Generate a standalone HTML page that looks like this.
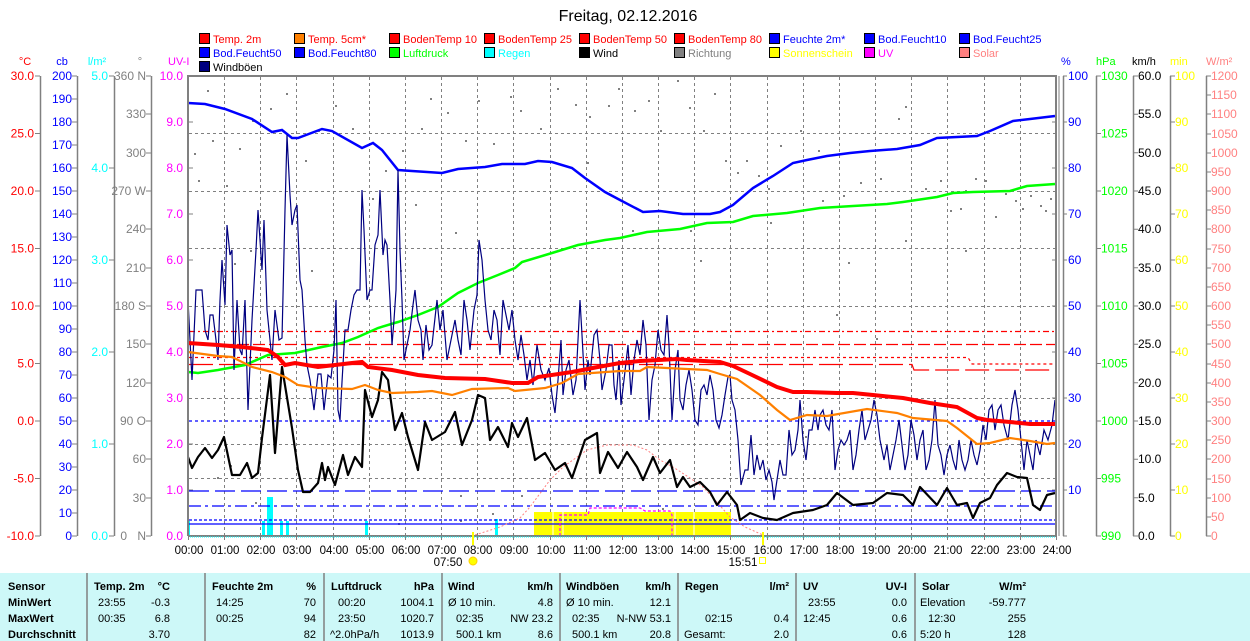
<!DOCTYPE html>
<html><head><meta charset="utf-8"><style>
html,body{margin:0;padding:0;background:#fff;width:1250px;height:641px;overflow:hidden}
svg{display:block;font-family:"Liberation Sans",Arial,sans-serif}
</style></head><body>
<svg width="1250" height="641" viewBox="0 0 1250 641" xmlns="http://www.w3.org/2000/svg">
<text x="628" y="21" font-size="16" text-anchor="middle" fill="#000">Freitag, 02.12.2016</text>
<g font-size="12" stroke="#000" stroke-width="1">
<rect x="199.5" y="33.5" width="10" height="10" fill="#f00"/><rect x="294.5" y="33.5" width="10" height="10" fill="#ff8000"/><rect x="389.5" y="33.5" width="10" height="10" fill="#f00"/><rect x="484.5" y="33.5" width="10" height="10" fill="#f00"/><rect x="579.5" y="33.5" width="10" height="10" fill="#f00"/><rect x="674.5" y="33.5" width="10" height="10" fill="#f00"/><rect x="769.5" y="33.5" width="10" height="10" fill="#00f"/><rect x="864.5" y="33.5" width="10" height="10" fill="#00f"/><rect x="959.5" y="33.5" width="10" height="10" fill="#00f"/>
<rect x="199.5" y="47.5" width="10" height="10" fill="#00f"/><rect x="294.5" y="47.5" width="10" height="10" fill="#00f"/><rect x="389.5" y="47.5" width="10" height="10" fill="#0f0"/><rect x="484.5" y="47.5" width="10" height="10" fill="#0ff"/><rect x="579.5" y="47.5" width="10" height="10" fill="#000"/><rect x="674.5" y="47.5" width="10" height="10" fill="#808080"/><rect x="769.5" y="47.5" width="10" height="10" fill="#ff0"/><rect x="864.5" y="47.5" width="10" height="10" fill="#f0f"/><rect x="959.5" y="47.5" width="10" height="10" fill="#ff8080"/>
<rect x="199.5" y="61.5" width="10" height="10" fill="#000080"/>
</g>
<g font-size="11">
<text x="213" y="43" fill="#f00">Temp. 2m</text><text x="308" y="43" fill="#f00">Temp. 5cm*</text><text x="403" y="43" fill="#f00">BodenTemp 10</text><text x="498" y="43" fill="#f00">BodenTemp 25</text><text x="593" y="43" fill="#f00">BodenTemp 50</text><text x="688" y="43" fill="#f00">BodenTemp 80</text><text x="783" y="43" fill="#00f">Feuchte 2m*</text><text x="878" y="43" fill="#00f">Bod.Feucht10</text><text x="973" y="43" fill="#00f">Bod.Feucht25</text>
<text x="213" y="57" fill="#00f">Bod.Feucht50</text><text x="308" y="57" fill="#00f">Bod.Feucht80</text><text x="403" y="57" fill="#0f0">Luftdruck</text><text x="498" y="57" fill="#0ff">Regen</text><text x="593" y="57" fill="#000">Wind</text><text x="688" y="57" fill="#808080">Richtung</text><text x="783" y="57" fill="#ff0">Sonnenschein</text><text x="878" y="57" fill="#f0f">UV</text><text x="973" y="57" fill="#ff8080">Solar</text>
<text x="213" y="71" fill="#000">Windböen</text>
</g>
<g font-size="11">
<text x="25" y="65" fill="#f00" text-anchor="middle">°C</text><text x="62" y="65" fill="#00f" text-anchor="middle">cb</text><text x="97" y="65" fill="#0ff" text-anchor="middle">l/m²</text><text x="140" y="65" fill="#808080" text-anchor="middle">°</text><text x="168" y="65" fill="#f0f">UV-I</text>
<text x="1061" y="65" fill="#00f">%</text><text x="1096" y="65" fill="#0f0">hPa</text><text x="1132" y="65" fill="#000">km/h</text><text x="1170" y="65" fill="#ff0">min</text><text x="1206" y="65" fill="#ff8080">W/m²</text>
</g>
<g stroke="#808080" stroke-width="1.5" fill="none">
<path d="M40.5 76V536M77.5 76V536M114.5 76V536M151.5 76V536"/>
<path d="M1063.5 76V536M1096.5 76V536M1133.5 76V536M1170.5 76V536M1206.5 76V536"/>
</g>
<g stroke="#808080" stroke-width="1">
<path d="M35 76h5M35 133.5h5M35 191h5M35 248.5h5M35 306h5M35 363.5h5M35 421h5M35 478.5h5M35 536h5"/>
<path d="M72 76h5M72 99h5M72 122h5M72 145h5M72 168h5M72 191h5M72 214h5M72 237h5M72 260h5M72 283h5M72 306h5M72 329h5M72 352h5M72 375h5M72 398h5M72 421h5M72 444h5M72 467h5M72 490h5M72 513h5M72 536h5"/>
<path d="M109 76h5M109 168h5M109 260h5M109 352h5M109 444h5M109 536h5"/>
<path d="M146 76h5M146 114h5M146 153h5M146 191h5M146 229h5M146 268h5M146 306h5M146 344h5M146 383h5M146 421h5M146 459h5M146 498h5M146 536h5"/>
<path d="M1063 76h4M1063 122h4M1063 168h4M1063 214h4M1063 260h4M1063 306h4M1063 352h4M1063 398h4M1063 444h4M1063 490h4M1063 536h4"/>
<path d="M1096 76h5M1096 133.5h5M1096 191h5M1096 248.5h5M1096 306h5M1096 363.5h5M1096 421h5M1096 478.5h5M1096 536h5"/>
<path d="M1133 76h5M1133 114.3h5M1133 152.7h5M1133 191h5M1133 229.3h5M1133 267.7h5M1133 306h5M1133 344.3h5M1133 382.7h5M1133 421h5M1133 459.3h5M1133 497.7h5M1133 536h5"/>
<path d="M1170 76h5M1170 122h5M1170 168h5M1170 214h5M1170 260h5M1170 306h5M1170 352h5M1170 398h5M1170 444h5M1170 490h5M1170 536h5"/>
<path d="M1206 76h5M1206 95h5M1206 114h5M1206 134h5M1206 153h5M1206 172h5M1206 191h5M1206 210h5M1206 229h5M1206 249h5M1206 268h5M1206 287h5M1206 306h5M1206 325h5M1206 344h5M1206 364h5M1206 383h5M1206 402h5M1206 421h5M1206 440h5M1206 459h5M1206 479h5M1206 498h5M1206 517h5M1206 536h5"/>
</g>
<g font-size="12" text-anchor="end" fill="#f00">
<text x="34" y="80">30.0</text><text x="34" y="137.5">25.0</text><text x="34" y="195">20.0</text><text x="34" y="252.5">15.0</text><text x="34" y="310">10.0</text><text x="34" y="367.5">5.0</text><text x="34" y="425">0.0</text><text x="34" y="482.5">-5.0</text><text x="34" y="540">-10.0</text>
</g>
<g font-size="12" text-anchor="end" fill="#00f">
<text x="72" y="80">200</text><text x="72" y="103">190</text><text x="72" y="126">180</text><text x="72" y="149">170</text><text x="72" y="172">160</text><text x="72" y="195">150</text><text x="72" y="218">140</text><text x="72" y="241">130</text><text x="72" y="264">120</text><text x="72" y="287">110</text><text x="72" y="310">100</text><text x="72" y="333">90</text><text x="72" y="356">80</text><text x="72" y="379">70</text><text x="72" y="402">60</text><text x="72" y="425">50</text><text x="72" y="448">40</text><text x="72" y="471">30</text><text x="72" y="494">20</text><text x="72" y="517">10</text><text x="72" y="540">0</text>
</g>
<g font-size="12" text-anchor="end" fill="#0ff">
<text x="108" y="80">5.0</text><text x="108" y="172">4.0</text><text x="108" y="264">3.0</text><text x="108" y="356">2.0</text><text x="108" y="448">1.0</text><text x="108" y="540">0.0</text>
</g>
<g font-size="12" text-anchor="end" fill="#808080">
<text x="146" y="80">360 N</text><text x="146" y="118">330</text><text x="146" y="157">300</text><text x="146" y="195">270 W</text><text x="146" y="233">240</text><text x="146" y="272">210</text><text x="146" y="310">180 S</text><text x="146" y="348">150</text><text x="146" y="387">120</text><text x="146" y="425">90  O</text><text x="146" y="463">60</text><text x="146" y="502">30</text><text x="146" y="540">N</text><text x="127" y="540">0</text>
</g>
<g font-size="12" text-anchor="end" fill="#f0f">
<text x="183" y="80">10.0</text><text x="183" y="126">9.0</text><text x="183" y="172">8.0</text><text x="183" y="218">7.0</text><text x="183" y="264">6.0</text><text x="183" y="310">5.0</text><text x="183" y="356">4.0</text><text x="183" y="402">3.0</text><text x="183" y="448">2.0</text><text x="183" y="494">1.0</text><text x="183" y="540">0.0</text>
</g>
<g font-size="12" fill="#00f">
<text x="1068" y="80">100</text><text x="1068" y="126">90</text><text x="1068" y="172">80</text><text x="1068" y="218">70</text><text x="1068" y="264">60</text><text x="1068" y="310">50</text><text x="1068" y="356">40</text><text x="1068" y="402">30</text><text x="1068" y="448">20</text><text x="1068" y="494">10</text>
</g>
<g font-size="12" fill="#0f0">
<text x="1101" y="80">1030</text><text x="1101" y="137.5">1025</text><text x="1101" y="195">1020</text><text x="1101" y="252.5">1015</text><text x="1101" y="310">1010</text><text x="1101" y="367.5">1005</text><text x="1101" y="425">1000</text><text x="1101" y="482.5">995</text><text x="1101" y="540">990</text>
</g>
<g font-size="12" fill="#000">
<text x="1138" y="80">60.0</text><text x="1138" y="118">55.0</text><text x="1138" y="157">50.0</text><text x="1138" y="195">45.0</text><text x="1138" y="233">40.0</text><text x="1138" y="272">35.0</text><text x="1138" y="310">30.0</text><text x="1138" y="348">25.0</text><text x="1138" y="387">20.0</text><text x="1138" y="425">15.0</text><text x="1138" y="463">10.0</text><text x="1138" y="502">5.0</text><text x="1138" y="540">0.0</text>
</g>
<g font-size="12" fill="#ff0">
<text x="1175" y="80">100</text><text x="1175" y="126">90</text><text x="1175" y="172">80</text><text x="1175" y="218">70</text><text x="1175" y="264">60</text><text x="1175" y="310">50</text><text x="1175" y="356">40</text><text x="1175" y="402">30</text><text x="1175" y="448">20</text><text x="1175" y="494">10</text><text x="1175" y="540">0</text>
</g>
<g font-size="12" fill="#ff8080">
<text x="1211" y="80">1200</text><text x="1211" y="99">1150</text><text x="1211" y="118">1100</text><text x="1211" y="138">1050</text><text x="1211" y="157">1000</text><text x="1211" y="176">950</text><text x="1211" y="195">900</text><text x="1211" y="214">850</text><text x="1211" y="233">800</text><text x="1211" y="253">750</text><text x="1211" y="272">700</text><text x="1211" y="291">650</text><text x="1211" y="310">600</text><text x="1211" y="329">550</text><text x="1211" y="348">500</text><text x="1211" y="368">450</text><text x="1211" y="387">400</text><text x="1211" y="406">350</text><text x="1211" y="425">300</text><text x="1211" y="444">250</text><text x="1211" y="463">200</text><text x="1211" y="483">150</text><text x="1211" y="502">100</text><text x="1211" y="521">50</text><text x="1211" y="540">0</text>
</g>
<g stroke="#808080" stroke-width="1" stroke-dasharray="3,3" fill="none">
<path d="M224.5 77V535M260.5 77V535M296.5 77V535M333.5 77V535M369.5 77V535M405.5 77V535M441.5 77V535M477.5 77V535M513.5 77V535M550.5 77V535M586.5 77V535M622.5 77V535M658.5 77V535M694.5 77V535M730.5 77V535M767.5 77V535M803.5 77V535M839.5 77V535M875.5 77V535M911.5 77V535M947.5 77V535M984.5 77V535M1020.5 77V535"/>
<path d="M189 133.5H1056M189 191.5H1056M189 248.5H1056M189 306.5H1056M189 398.5H1056M189 444.5H1056M189 478.5H1056"/>
</g>
<g stroke="#808080" stroke-width="1"><path d="M189 122h4M189 168h4M189 214h4M189 260h4M189 352h4M189 444h4M189 490h4M1052 122h4M1052 168h4M1052 214h4M1052 260h4M1052 306h4M1052 352h4M1052 398h4M1052 444h4M1052 490h4"/></g>
<g fill="#808080">
<rect x="207" y="90" width="2" height="2"/><rect x="252" y="120" width="2" height="2"/><rect x="270" y="108" width="2" height="2"/><rect x="286" y="93" width="2" height="2"/><rect x="194" y="153" width="2" height="2"/><rect x="198" y="180" width="2" height="2"/><rect x="212" y="140" width="2" height="2"/><rect x="239" y="148" width="2" height="2"/><rect x="226" y="185" width="2" height="2"/><rect x="305" y="160" width="2" height="2"/><rect x="318" y="130" width="2" height="2"/><rect x="335" y="105" width="2" height="2"/><rect x="352" y="128" width="2" height="2"/><rect x="372" y="198" width="2" height="2"/><rect x="385" y="170" width="2" height="2"/><rect x="402" y="150" width="2" height="2"/><rect x="421" y="128" width="2" height="2"/><rect x="430" y="98" width="2" height="2"/><rect x="447" y="112" width="2" height="2"/><rect x="465" y="140" width="2" height="2"/><rect x="478" y="100" width="2" height="2"/><rect x="493" y="143" width="2" height="2"/><rect x="510" y="96" width="2" height="2"/><rect x="520" y="110" width="2" height="2"/><rect x="540" y="128" width="2" height="2"/><rect x="557" y="88" width="2" height="2"/><rect x="575" y="104" width="2" height="2"/><rect x="589" y="116" width="2" height="2"/><rect x="608" y="105" width="2" height="2"/><rect x="618" y="88" width="2" height="2"/><rect x="634" y="110" width="2" height="2"/><rect x="648" y="100" width="2" height="2"/><rect x="660" y="130" width="2" height="2"/><rect x="677" y="80" width="2" height="2"/><rect x="689" y="107" width="2" height="2"/><rect x="703" y="130" width="2" height="2"/><rect x="714" y="93" width="2" height="2"/><rect x="725" y="160" width="2" height="2"/><rect x="737" y="172" width="2" height="2"/><rect x="746" y="160" width="2" height="2"/><rect x="758" y="175" width="2" height="2"/><rect x="768" y="188" width="2" height="2"/><rect x="780" y="145" width="2" height="2"/><rect x="800" y="130" width="2" height="2"/><rect x="818" y="150" width="2" height="2"/><rect x="822" y="200" width="2" height="2"/><rect x="843" y="195" width="2" height="2"/><rect x="860" y="182" width="2" height="2"/><rect x="880" y="178" width="2" height="2"/><rect x="905" y="106" width="2" height="2"/><rect x="898" y="118" width="2" height="2"/><rect x="925" y="188" width="2" height="2"/><rect x="940" y="180" width="2" height="2"/><rect x="950" y="210" width="2" height="2"/><rect x="960" y="208" width="2" height="2"/><rect x="965" y="190" width="2" height="2"/><rect x="975" y="178" width="2" height="2"/><rect x="985" y="180" width="2" height="2"/><rect x="995" y="216" width="2" height="2"/><rect x="1005" y="193" width="2" height="2"/><rect x="1015" y="200" width="2" height="2"/><rect x="1022" y="208" width="2" height="2"/><rect x="1030" y="195" width="2" height="2"/><rect x="1040" y="205" width="2" height="2"/><rect x="1050" y="198" width="2" height="2"/><rect x="1045" y="210" width="2" height="2"/><rect x="965" y="250" width="2" height="2"/><rect x="905" y="240" width="2" height="2"/><rect x="848" y="262" width="2" height="2"/><rect x="770" y="222" width="2" height="2"/><rect x="700" y="260" width="2" height="2"/><rect x="690" y="230" width="2" height="2"/><rect x="632" y="230" width="2" height="2"/><rect x="587" y="162" width="2" height="2"/><rect x="455" y="232" width="2" height="2"/><rect x="415" y="204" width="2" height="2"/><rect x="311" y="270" width="2" height="2"/><rect x="250" y="250" width="2" height="2"/><rect x="234" y="263" width="2" height="2"/><rect x="330" y="330" width="2" height="2"/><rect x="400" y="270" width="2" height="2"/><rect x="805" y="436" width="2" height="2"/><rect x="876" y="338" width="2" height="2"/><rect x="836" y="314" width="2" height="2"/><rect x="460" y="495" width="2" height="2"/><rect x="230" y="465" width="2" height="2"/><rect x="398" y="523" width="2" height="2"/><rect x="460" y="520" width="2" height="2"/><rect x="492" y="513" width="2" height="2"/><rect x="521" y="495" width="2" height="2"/><rect x="558" y="529" width="2" height="2"/><rect x="585" y="528" width="2" height="2"/><rect x="662" y="508" width="2" height="2"/><rect x="662" y="528" width="2" height="2"/><rect x="255" y="502" width="2" height="2"/><rect x="217" y="477" width="2" height="2"/></g>
<rect x="534" y="512" width="197" height="24" fill="#ff0"/>
<path d="M553 512V536M563 512V536M675 512V536M694 512V536" stroke="#fff" stroke-width="1"/>
<g fill="#0ff"><rect x="187" y="521" width="3" height="15"/><rect x="262" y="521" width="3" height="15"/><rect x="267" y="497" width="6" height="39"/><rect x="280" y="521" width="3" height="15"/><rect x="286" y="521" width="3" height="15"/><rect x="365" y="521" width="3" height="15"/><rect x="495" y="519" width="3" height="17"/></g>
<g stroke="#00f" stroke-width="1.3" fill="none">
<path d="M189 421H1056" stroke-dasharray="3,3"/>
<path d="M189 491H1056" stroke-dasharray="20,6"/>
<path d="M189 506H1056" stroke-dasharray="12,4,3,4"/>
<path d="M189 520H1056" stroke-dasharray="3,2"/>
<path d="M189 524H1056"/>
</g>
<g stroke="#f00" stroke-width="1.2" fill="none">
<path d="M189 331.5H1056" stroke-dasharray="6,3,2,3"/>
<path d="M189 344.5H430M470 344.5H1056" stroke-dasharray="12,4"/>
<path d="M189 357.5H968L972 364H1056" stroke-dasharray="3,3"/>
<path d="M189 364.5H912L914 370H1056" stroke-dasharray="24,6"/>
</g>
<path d="M475 535L500 527L520 518L530 507L550 480L563 467L587 450L607 445L633 445L647 450L660 460L673 467L690 478L703 487L715 500L730 517L745 527L763 535" stroke="#ff8080" stroke-width="1" stroke-dasharray="2,2" fill="none"/>
<path d="M560 536V515H588L590 508H640L645 511H670L672 515V536" stroke="#f0f" stroke-width="1.2" stroke-dasharray="3,2" fill="none"/>
<polyline fill="none" stroke="#00f" stroke-width="2.5" points="188,103 205,104 225,109 252,119 272,132 282,130 292,138 298,138 322,129 332,131 362,148 373,143 382,150 398,170 412,171 442,173 458,169 485,167 502,164 525,164 538,161 552,162 572,168 585,178 605,192 620,200 643,212 660,211 683,214 710,214 720,212 733,205 753,188 773,176 793,163 807,160 827,156 850,153 870,151 897,149 920,145 937,138 977,136 990,131 1013,121 1030,119 1055,116"/>
<polyline fill="none" stroke="#0f0" stroke-width="2.5" points="188,372 198,373 218,370 245,365 268,355 295,353 322,347 342,343 358,337 378,328 398,322 418,315 438,307 458,293 478,283 498,275 515,268 522,262 552,253 578,245 605,240 620,238 647,232 680,229 707,223 733,222 753,216 787,213 820,208 853,206 887,204 903,202 937,197 953,193 973,192 1010,191 1027,186 1055,184"/>
<polyline fill="none" stroke="#000080" stroke-width="1.2" points="188,300 192,380 196,290 202,290 205,330 208,340 210,315 213,315 216,340 218,360 220,300 222,260 225,305 227,225 230,255 232,250 234,370 237,300 240,350 242,355 245,300 248,410 252,320 256,250 258,210 262,270 264,220 267,310 270,340 272,360 275,310 279,340 282,338 285,210 287,135 290,195 292,225 295,210 297,205 300,280 302,290 305,340 307,365 310,380 314,410 318,374 321,374 324,410 328,375 331,378 334,350 336,300 338,410 340,420 342,382 345,330 348,330 351,310 354,295 357,290 360,290 362,190 364,230 367,300 370,290 372,290 375,245 378,235 380,190 383,255 385,240 387,245 390,300 392,345 394,320 396,290 398,170 400,250 402,300 404,360 407,345 410,330 413,305 415,290 418,320 421,330 423,360 426,325 429,350 432,345 437,300 440,330 443,310 447,360 452,335 455,320 458,340 461,355 464,300 467,320 470,350 474,310 477,295 479,240 482,260 485,300 488,330 491,340 494,310 497,320 500,355 503,300 506,315 509,330 512,310 515,340 518,360 521,335 524,355 527,380 530,360 533,385 537,345 541,370 545,380 549,368 552,395 555,413 558,380 561,340 563,395 566,370 569,360 573,395 576,380 580,300 582,335 585,390 588,360 590,375 594,335 597,330 600,360 602,390 606,370 609,345 612,345 614,385 616,400 619,360 621,405 624,380 628,345 631,395 634,360 637,340 640,355 643,320 646,345 649,420 652,380 655,365 658,330 661,350 664,355 667,315 669,345 672,420 675,370 678,350 680,400 683,410 686,385 689,370 692,390 695,420 698,425 701,390 704,385 707,395 710,375 713,390 716,420 719,428 722,415 725,395 728,377 730,375 732,400 735,410 738,440 741,485 745,470 748,470 751,435 754,475 757,455 760,470 763,460 766,480 769,470 772,482 774,500 777,480 780,460 783,475 786,475 789,430 792,455 795,450 798,430 800,400 803,440 806,460 809,430 812,430 815,410 818,430 820,415 823,410 826,425 829,430 832,410 835,470 838,450 841,440 844,445 847,440 850,430 853,470 856,455 859,430 862,410 865,440 868,430 871,420 874,400 877,415 880,440 884,460 887,445 890,470 893,455 896,440 899,420 902,445 905,470 908,455 911,420 914,435 917,460 920,440 923,430 926,470 929,460 932,440 935,400 938,445 941,455 944,475 947,455 950,445 953,460 956,470 959,440 962,460 965,470 968,460 971,440 974,455 977,465 980,450 983,425 986,440 989,410 992,405 995,430 998,410 1001,405 1004,425 1008,440 1012,405 1015,390 1018,410 1021,440 1024,470 1027,440 1030,455 1033,470 1036,440 1040,455 1044,430 1048,440 1052,425 1055,400"/>
<polyline fill="none" stroke="#000" stroke-width="2.2" stroke-linejoin="round" points="188,457 192,468 198,457 205,448 212,458 218,450 224,437 232,475 240,475 247,463 252,478 258,473 262,438 270,375 275,453 282,367 292,428 298,470 303,492 310,492 318,483 322,463 325,480 328,467 335,485 343,455 348,475 355,457 362,467 365,390 372,417 378,400 382,372 388,380 395,430 402,413 408,437 418,470 425,422 432,440 445,432 455,412 462,445 472,420 478,395 485,398 490,440 498,427 508,447 512,423 518,437 527,418 535,460 545,453 555,470 565,463 572,478 585,440 597,433 600,473 608,452 618,468 627,452 637,467 643,480 653,457 660,473 670,460 677,487 683,477 690,487 700,482 710,492 717,505 727,492 737,505 740,520 750,513 763,518 777,520 793,513 813,510 827,505 837,493 853,505 873,503 887,493 903,495 913,505 920,487 937,505 947,488 957,505 967,503 973,518 980,503 990,498 997,485 1007,473 1017,477 1027,478 1033,505 1040,510 1047,495 1055,493"/>
<polyline fill="none" stroke="#ff8000" stroke-width="2.2" points="188,352 218,356 232,357 252,367 272,372 285,377 298,385 318,388 352,389 365,385 378,390 392,393 418,392 432,391 452,395 472,389 508,388 515,391 545,388 562,383 578,374 620,371 640,371 647,367 707,370 720,374 737,379 760,395 777,410 790,420 807,415 827,416 867,409 897,413 913,418 947,421 957,428 977,444 990,443 1010,438 1030,441 1047,444 1055,443"/>
<polyline fill="none" stroke="#f00" stroke-width="4" points="188,343 218,345 242,347 268,350 278,357 285,365 295,363 318,367 352,363 362,362 368,367 392,370 418,375 445,378 485,379 512,383 528,383 538,377 572,372 598,367 620,363 640,361 677,359 687,360 720,362 733,366 750,374 777,387 793,392 807,392 837,393 853,393 873,395 903,398 930,403 957,407 977,418 987,420 1010,422 1030,424 1055,424"/>
<path d="M188 536V76H1056V536" stroke="#808080" stroke-width="2" fill="none"/>
<path d="M1059 76V536" stroke="#808080" stroke-width="1"/>
<path d="M188 536H1057" stroke="#808080" stroke-width="2"/>
<path d="M188 537H1057" stroke="#0ff" stroke-width="1" stroke-dasharray="1,1"/>
<g stroke="#808080" stroke-width="1"><path d="M188.5 536v4M224.5 536v4M260.5 536v4M296.5 536v4M333.5 536v4M369.5 536v4M405.5 536v4M441.5 536v4M477.5 536v4M513.5 536v4M550.5 536v4M586.5 536v4M622.5 536v4M658.5 536v4M694.5 536v4M730.5 536v4M767.5 536v4M803.5 536v4M839.5 536v4M875.5 536v4M911.5 536v4M947.5 536v4M984.5 536v4M1020.5 536v4M1056.5 536v4"/></g>
<g font-size="11.5" text-anchor="middle" fill="#000">
<text x="189" y="554">00:00</text><text x="225" y="554">01:00</text><text x="261" y="554">02:00</text><text x="297" y="554">03:00</text><text x="334" y="554">04:00</text><text x="370" y="554">05:00</text><text x="406" y="554">06:00</text><text x="442" y="554">07:00</text><text x="478" y="554">08:00</text><text x="514" y="554">09:00</text><text x="551" y="554">10:00</text><text x="587" y="554">11:00</text><text x="623" y="554">12:00</text><text x="659" y="554">13:00</text><text x="695" y="554">14:00</text><text x="731" y="554">15:00</text><text x="768" y="554">16:00</text><text x="804" y="554">17:00</text><text x="840" y="554">18:00</text><text x="876" y="554">19:00</text><text x="912" y="554">20:00</text><text x="948" y="554">21:00</text><text x="985" y="554">22:00</text><text x="1021" y="554">23:00</text><text x="1057" y="554">24:00</text>
<text x="448" y="566">07:50</text><text x="743" y="566">15:51</text>
</g>
<rect x="472" y="532" width="2" height="13" fill="#ff0"/><rect x="762" y="532" width="2" height="13" fill="#ff0"/>
<circle cx="473" cy="561" r="4" fill="#ff0" stroke="#ffd000"/>
<rect x="759.5" y="557.5" width="6" height="6" fill="none" stroke="#ff0"/>
<rect x="0" y="573" width="1250" height="68" fill="#cdf8f8"/>
<g stroke="#808080" stroke-width="1.5"><path d="M87 573V641M205 573V641M324 573V641M442 573V641M560 573V641M678 573V641M796 573V641M915 573V641"/></g>
<g font-size="11" font-weight="bold" fill="#000">
<text x="8" y="590">Sensor</text><text x="8" y="606">MinWert</text><text x="8" y="622">MaxWert</text><text x="8" y="638">Durchschnitt</text>
<text x="94" y="590">Temp. 2m</text><text x="212" y="590">Feuchte 2m</text><text x="331" y="590">Luftdruck</text><text x="448" y="590">Wind</text><text x="566" y="590">Windböen</text><text x="685" y="590">Regen</text><text x="803" y="590">UV</text><text x="922" y="590">Solar</text>
<g text-anchor="end"><text x="170" y="590">°C</text><text x="316" y="590">%</text><text x="434" y="590">hPa</text><text x="553" y="590">km/h</text><text x="671" y="590">km/h</text><text x="789" y="590">l/m²</text><text x="907" y="590">UV-I</text><text x="1026" y="590">W/m²</text></g>
</g>
<g font-size="11" fill="#000">
<text x="98" y="606">23:55</text><text x="98" y="622">00:35</text>
<text x="216" y="606">14:25</text><text x="216" y="622">00:25</text>
<text x="338" y="606">00:20</text><text x="338" y="622">23:50</text><text x="330" y="638">^2.0hPa/h</text>
<text x="448" y="606">Ø 10 min.</text><text x="456" y="622">02:35</text><text x="456" y="638">500.1 km</text>
<text x="566" y="606">Ø 10 min.</text><text x="572" y="622">02:35</text><text x="572" y="638">500.1 km</text>
<text x="705" y="622">02:15</text><text x="684" y="638">Gesamt:</text>
<text x="808" y="606">23:55</text><text x="803" y="622">12:45</text>
<text x="920" y="606">Elevation</text><text x="928" y="622">12:30</text><text x="920" y="638">5:20 h</text>
<g text-anchor="end">
<text x="170" y="606">-0.3</text><text x="170" y="622">6.8</text><text x="170" y="638">3.70</text>
<text x="316" y="606">70</text><text x="316" y="622">94</text><text x="316" y="638">82</text>
<text x="434" y="606">1004.1</text><text x="434" y="622">1020.7</text><text x="434" y="638">1013.9</text>
<text x="553" y="606">4.8</text><text x="553" y="622">NW 23.2</text><text x="553" y="638">8.6</text>
<text x="671" y="606">12.1</text><text x="671" y="622">N-NW 53.1</text><text x="671" y="638">20.8</text>
<text x="789" y="622">0.4</text><text x="789" y="638">2.0</text>
<text x="907" y="606">0.0</text><text x="907" y="622">0.6</text><text x="907" y="638">0.6</text>
<text x="1026" y="606">-59.777</text><text x="1026" y="622">255</text><text x="1026" y="638">128</text>
</g>
</g>
</svg>
</body></html>
